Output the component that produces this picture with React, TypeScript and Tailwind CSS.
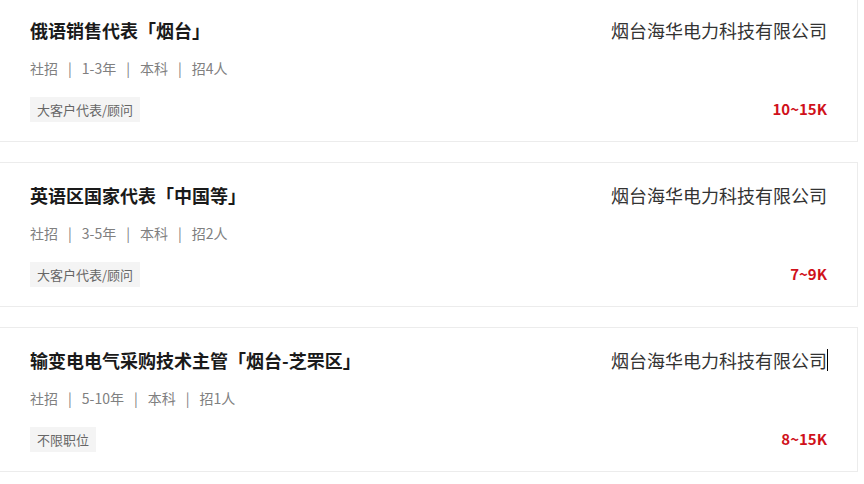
const JOBS = [
  {
    title: '俄语销售代表「烟台」',
    meta: ['社招', '1-3年', '本科', '招4人'],
    tag: '大客户代表/顾问',
    company: '烟台海华电力科技有限公司',
    salary: '10~15K',
  },
  {
    title: '英语区国家代表「中国等」',
    meta: ['社招', '3-5年', '本科', '招2人'],
    tag: '大客户代表/顾问',
    company: '烟台海华电力科技有限公司',
    salary: '7~9K',
  },
  {
    title: '输变电电气采购技术主管「烟台-芝罘区」',
    meta: ['社招', '5-10年', '本科', '招1人'],
    tag: '不限职位',
    company: '烟台海华电力科技有限公司',
    salary: '8~15K',
    caret: true,
  },
];

export default function App() {
  return (
    <div
      className="w-[864px] h-[484px] overflow-hidden bg-white"
      style={{ fontFamily: '"Noto Sans CJK SC", "Noto Sans", sans-serif' }}
    >
      <div className="-mt-[3px] -ml-px flex flex-col gap-5">
        {JOBS.map((job, i) => (
          <div
            key={i}
            className="w-[859px] h-[145px] border border-[#ececec] bg-white flex justify-between pl-[30px] pr-[30px] pt-5 pb-5"
          >
            <div className="flex flex-col">
              <h3 className="text-[18px] leading-6 font-bold text-[#1a1a1a]">{job.title}</h3>
              <div className="mt-4 flex items-center text-[14px] leading-5 text-[#808080]">
                {job.meta.map((m, j) => (
                  <span key={j} className="flex items-center">
                    {j > 0 && <span className="mx-[10px]">|</span>}
                    {m}
                  </span>
                ))}
              </div>
              <div className="mt-[18px]">
                <span className="inline-block h-[25px] leading-[25px] px-[7px] bg-[#f4f4f4] text-[13px] text-[#666]">
                  {job.tag}
                </span>
              </div>
            </div>
            <div className="flex flex-col items-end justify-between">
              <div className="flex items-center text-[18px] leading-6 text-[#333]">
                {job.company}
                {job.caret && <span className="w-px h-[22px] bg-black -mr-px" />}
              </div>
              <div className="h-[25px] leading-[25px] text-[15px] font-bold text-[#d0111b]">
                {job.salary}
              </div>
            </div>
          </div>
        ))}
      </div>
    </div>
  );
}
